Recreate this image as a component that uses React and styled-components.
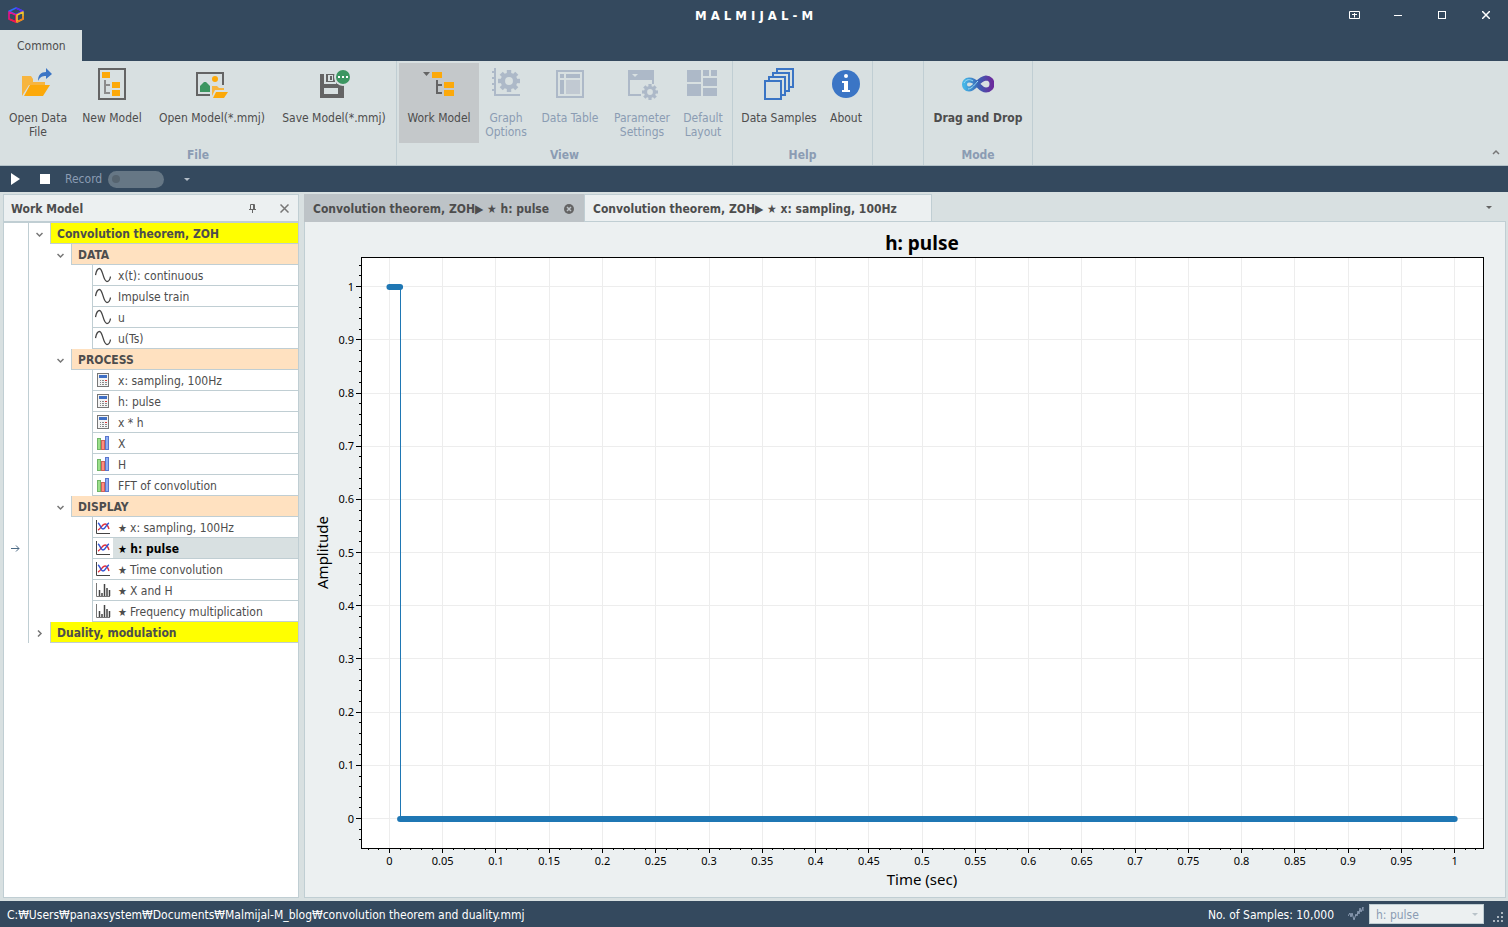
import { useLayoutEffect, useRef, useState } from "react";
import styled, { createGlobalStyle, css } from "styled-components";

const navy = "#34495e";
const face = "#d8e0e1";
const line = "#c0ced3";
const pane = "#ecf0f1";
const ink = "#4d4d4d";
const muted = "#8b9cb3";
const disabled = "#adb9c8";
const gold = "#fca90a";
const grey = "#646464";

const GlobalStyle = createGlobalStyle`
  * {
    box-sizing: border-box;
  }
  body {
    margin: 0;
    background: ${face};
  }
  body, button, select {
    font-family: "DejaVu Sans Condensed", "DejaVu Sans", sans-serif;
    font-size: 12px;
    line-height: 14px;
    color: ${ink};
  }
  button {
    border: 0;
    padding: 0;
    background: none;
  }
  svg {
    display: block;
    flex: none;
  }
`;

const Window = styled.div`
  display: flex;
  flex-direction: column;
  height: 100vh;
`;

/* ---------- title bar ---------- */

const TitleBar = styled.header`
  display: grid;
  grid-template-columns: 1fr auto 1fr;
  align-items: center;
  height: 30px;
  background: ${navy};
`;

const LogoBox = styled.div`
  padding-left: 8px;
`;

const Title = styled.h1`
  margin: 0;
  padding-top: 1px;
  font-size: 13px;
  font-weight: 700;
  color: #fff;
`;

const WindowButtons = styled.div`
  display: flex;
  justify-content: flex-end;
`;

const WindowButton = styled.button`
  display: flex;
  align-items: center;
  justify-content: center;
  width: 44px;
  height: 30px;
`;

/* ---------- ribbon ---------- */

const TabStrip = styled.nav`
  display: flex;
  height: 31px;
  background: ${navy};
`;

const RibbonTab = styled.button`
  padding: 0 16px 0 17px;
  background: ${face};
`;

const Ribbon = styled.section`
  display: flex;
  height: 105px;
  background: ${face};
  border-bottom: 1px solid #b3c1c8;
`;

const Group = styled.div`
  display: flex;
  flex-direction: column;
  flex: 0 0 ${(p) => p.$width}px;
  padding: 2px 2px 0;
  border-right: 1px solid ${line};
`;

const GroupButtons = styled.div`
  display: flex;
  height: 80px;
`;

const GroupTitle = styled.div`
  padding-top: 5px;
  text-align: center;
  font-weight: 700;
  color: ${muted};
`;

const BigButton = styled.button`
  display: flex;
  flex-direction: column;
  align-items: center;
  gap: 11px;
  width: ${(p) => p.$width}px;
  padding-top: 5px;
  white-space: pre;
  font-weight: ${(p) => (p.$bold ? 700 : 400)};
  background: ${(p) => (p.$active ? "#c4c8ca" : "none")};
  &:disabled {
    color: ${muted};
  }
`;

const Collapse = styled.button`
  align-self: flex-end;
  margin: 0 8px 10px auto;
`;

/* ---------- run bar ---------- */

const RunBar = styled.div`
  display: flex;
  align-items: center;
  height: 26px;
  padding-left: 11px;
  background: ${navy};
`;

const RunButton = styled.button`
  margin-right: ${(p) => p.$gap}px;
`;

const RecordLabel = styled.label`
  display: flex;
  align-items: center;
  gap: 6px;
  color: ${muted};
`;

const Switch = styled.input`
  appearance: none;
  display: flex;
  align-items: center;
  width: 56px;
  height: 17px;
  margin: 0 20px 0 0;
  padding-left: 4px;
  border-radius: 9px;
  background: #667785;
  &::before {
    content: "";
    width: 8px;
    height: 8px;
    border-radius: 50%;
    background: #56646f;
  }
`;

/* ---------- work area ---------- */

const Body = styled.main`
  display: flex;
  flex: 1;
  min-height: 0;
  gap: 5px;
  padding: 2px 2px 3px 3px;
  background: ${face};
`;

const SidePanel = styled.aside`
  flex: 0 0 296px;
  display: flex;
  flex-direction: column;
  border: 1px solid ${line};
  background: #fff;
`;

const PanelHeader = styled.div`
  display: flex;
  align-items: center;
  height: 28px;
  padding: 0 9px 0 7px;
  background: ${pane};
  border-bottom: 2px solid ${line};
`;

const PanelTitle = styled.h2`
  flex: 1;
  margin: 0;
  padding-top: 1px;
  font-size: 12px;
  font-weight: 700;
`;

const PanelButton = styled.button`
  margin-left: 24px;
`;

const Tree = styled.ul`
  margin: 0;
  padding: 0;
  list-style: none;
`;

const Row = styled.li`
  display: flex;
  height: 21px;
`;

const Marker = styled.div`
  display: flex;
  align-items: center;
  justify-content: center;
  flex: 0 0 25px;
  padding-right: 2px;
  border-right: 1px solid ${line};
`;

const Indent = styled.div`
  display: flex;
  align-items: center;
  justify-content: flex-end;
  flex: 0 0 ${(p) => p.$level * 21}px;
  padding: 2px 7px 0 0;
`;

const rowFill = { 1: "#ffff00", 2: "#ffe1c0", 3: "#fff" };

const Node = styled.button`
  display: flex;
  align-items: center;
  flex: 1;
  border-left: 1px solid ${line};
  border-bottom: 1px solid ${line};
  background: ${(p) => rowFill[p.$level]};
  font-weight: ${(p) => (p.$level < 3 ? 700 : 400)};
  padding-left: ${(p) => (p.$level < 3 ? 6 : 2)}px;
`;

const NodeText = styled.span`
  flex: 1;
  height: 20px;
  line-height: 22px;
  text-align: left;
  white-space: nowrap;
  ${(p) =>
    p.$leaf &&
    css`
      margin-left: 2px;
      padding-left: 5px;
    `}
  ${(p) =>
    p.$selected &&
    css`
      background: ${face};
      color: #000;
      font-weight: 700;
    `}
`;

const Star = styled.span`
  font-size: 11px;
`;

const Documents = styled.section`
  flex: 1;
  min-width: 0;
  display: flex;
  flex-direction: column;
`;

const DocTabs = styled.div`
  display: flex;
  flex: 0 0 28px;
`;

const DocTab = styled.button`
  display: flex;
  align-items: center;
  justify-content: space-between;
  width: ${(p) => p.$width}px;
  padding: 1px 9px 0 8px;
  white-space: nowrap;
  font-weight: 700;
  border: 1px solid ${(p) => (p.$active ? "#bdc3c7" : line)};
  background: ${(p) => (p.$active ? "#bdc3c7" : pane)};
`;

const TabFiller = styled.div`
  flex: 1;
  display: flex;
  align-items: center;
  justify-content: flex-end;
  padding-right: 14px;
  border-bottom: 1px solid ${line};
`;

const ChartPane = styled.div`
  flex: 1;
  min-height: 0;
  overflow: hidden;
  border: 1px solid ${line};
  border-top: 0;
  background: ${pane};
`;

const ChartSvg = styled.svg`
  width: 100%;
  height: 100%;
  font-family: "Noto Sans", "Open Sans", sans-serif;
  font-size: 11px;
  fill: #000;
`;

/* ---------- status bar ---------- */

const StatusBar = styled.footer`
  display: flex;
  align-items: center;
  height: 26px;
  padding: 0 4px 0 7px;
  background: ${navy};
  color: #fff;
`;

const FilePath = styled.span`
  flex: 1;
  padding-top: 1px;
`;

const SampleCount = styled.span`
  margin-right: 14px;
  padding-top: 1px;
`;

const PickerLabel = styled.label`
  display: grid;
  grid-template-columns: 21px 115px;
  align-items: center;
  margin-right: 8px;
`;

const Picker = styled.select`
  appearance: none;
  height: 20px;
  padding: 1px 6px 0;
  border: 1px solid ${line};
  border-radius: 0;
  background: ${pane};
  color: ${muted};
  opacity: 1;
  grid-area: 1 / 2;
`;

const PickerArrow = styled.span`
  grid-area: 1 / 2;
  justify-self: end;
  padding-right: 6px;
  pointer-events: none;
`;

const Grip = styled.div`
  padding-top: 6px;
`;

/* ---------- icons ---------- */

const Icon = ({ size = 32, children }) => (
  <svg width={size} height={size} viewBox={`0 0 ${size} ${size}`} aria-hidden="true">
    {children}
  </svg>
);

const Down = ({ color = grey, width = 6 }) => (
  <svg width={width} height={width / 2} viewBox="0 0 6 3" aria-hidden="true">
    <path d="M0 0h6L3 3z" fill={color} />
  </svg>
);

const Logo = () => (
  <Icon size={16}>
    <g fill="none" strokeWidth="1.6" strokeLinejoin="round">
      <path d="M1 4.2 8 1l7 3.2L8 7.6z" stroke="#2d6bff" />
      <path d="M8 1l7 3.2L8 7.6" stroke="#5a2bea" />
      <path d="M1 5v7l7 3V8z" stroke="#e8128b" />
      <path d="M1 12l7 3V8" stroke="#f0184a" />
      <path d="M15 5v7l-6 3V8z" stroke="#f3c32a" />
      <path d="M15 9v3l-6 3" stroke="#f0801e" />
    </g>
  </Icon>
);

const Gear = ({ cx, cy, r }) => (
  <g transform={`translate(${cx} ${cy})`} fill={disabled}>
    {[0, 45, 90, 135].map((a) => (
      <rect key={a} x={-r / 5} y={-r} width={(r * 2) / 5} height={r * 2} transform={`rotate(${a})`} />
    ))}
    <circle r={r * 0.76} />
    <circle r={r * 0.36} fill={face} />
  </g>
);

const OpenDataIcon = () => (
  <Icon>
    <path d="M0 8h9l2 3v3h12v3H7L0 28z" fill="#f7b53f" />
    <path d="M8 17h20l-7 11H2z" fill={gold} />
    <path d="M16 13C16 7 19 4 24 4V0l6 6-6 5V8c-4 0-6 1-8 5z" fill="#3b75c5" />
  </Icon>
);

const NewModelIcon = () => (
  <Icon>
    <rect x="3" y="1" width="26" height="30" fill="none" stroke={grey} strokeWidth="2" />
    <path d="M6 4h8v6H6zM16 14h8v6h-8zM16 22h8v6h-8z" fill={gold} />
    <path d="M9 12v13h5M9 17h5" fill="none" stroke="#8c8c8c" strokeWidth="2" />
  </Icon>
);

const OpenModelIcon = () => (
  <Icon>
    <path d="M27 17V5H1v22h13" fill="none" stroke={grey} strokeWidth="2" />
    <circle cx="19" cy="11" r="3" fill={gold} />
    <path d="M4 18l4-4h2l4 4v6H4z" fill="#3c9661" />
    <path d="M16 18h5l2 2h5v2H19l-3 6z" fill="#f7b53f" />
    <path d="M20 24h12l-4 6H17z" fill={gold} />
  </Icon>
);

const SaveModelIcon = () => (
  <Icon>
    <path d="M2 6h24v24H2z" fill={grey} />
    <path d="M6 6h12v10H6zM6 20h14v6H6z" fill={face} />
    <path d="M8 6h9v8H8z" fill={grey} />
    <path d="M10 7h5v6h-5z" fill={face} />
    <path d="M12 8h2v4h-2z" fill={grey} />
    <circle cx="25" cy="9" r="9" fill={face} />
    <circle cx="25" cy="9" r="7" fill="#3c9661" />
    <path d="M20 8h2v2h-2zM24 8h2v2h-2zM28 8h2v2h-2z" fill="#fff" />
  </Icon>
);

const WorkModelIcon = () => (
  <Icon>
    <path d="M0 4h7L3.500 8z" fill={grey} />
    <path d="M9 4h10v6H9zM21 14h10v6H21zM21 22h10v6H21z" fill={gold} />
    <path d="M14 12v13h5M14 17h5" fill="none" stroke={grey} strokeWidth="2" />
  </Icon>
);

const GraphIcon = () => (
  <Icon>
    <path d="M5 0v27h25M2 4h3M2 10h3M2 16h3M2 22h3" fill="none" stroke={disabled} strokeWidth="2" />
    <Gear cx={19} cy={13} r={11} />
  </Icon>
);

const TableIcon = () => (
  <Icon>
    <rect x="3" y="3" width="26" height="26" fill="none" stroke={disabled} strokeWidth="2" />
    <path d="M6 6h4v4H6zM12 6h14v4H12zM6 12h4v14H6z" fill={disabled} />
    <path d="M12 12h14v14H12z" fill="#c1c9d2" />
  </Icon>
);

const ParameterIcon = () => (
  <Icon>
    <path d="M2 2h26v10H2z" fill={disabled} />
    <path d="M3 12v15h12M27 12v4" fill="none" stroke={disabled} strokeWidth="2" />
    <path d="M6 6h6L9 9z" fill={face} />
    <Gear cx={24} cy={24} r={8} />
  </Icon>
);

const LayoutIcon = () => (
  <Icon>
    <path
      d="M0 2h14v12H0zM16 2h6v6h-6zM24 2h6v6h-6zM16 10h14v8H16zM0 16h14v12H0zM16 20h14v8H16z"
      fill={disabled}
    />
  </Icon>
);

const SamplesIcon = () => (
  <Icon>
    {[3, 2, 1, 0].map((i) => (
      <rect
        key={i}
        x={2 + 4 * i}
        y={13 - 4 * i}
        width="16"
        height="18"
        fill={face}
        stroke="#3b75c5"
        strokeWidth="2"
      />
    ))}
  </Icon>
);

const AboutIcon = () => (
  <Icon>
    <circle cx="16" cy="16" r="14" fill="#3b75c5" />
    <circle cx="16" cy="8" r="2" fill="#fff" />
    <path d="M12 13h6v9h2v2h-8v-2h2v-7h-2z" fill="#fff" />
  </Icon>
);

const DragIcon = () => (
  <Icon>
    <defs>
      <linearGradient id="loop" x1="0" x2="1" y1="0" y2="0">
        <stop offset="0" stopColor="#45b5e6" />
        <stop offset="0.5" stopColor="#3a62b4" />
        <stop offset="1" stopColor="#6a2c9c" />
      </linearGradient>
    </defs>
    <path
      d="M16 17C12 12 9 12 7 12c-6 0-6 9 0 9 6 0 9-10 17-11 8 0 8 12 0 12-4 0-6-3-8-5z"
      fill="none"
      stroke="url(#loop)"
      strokeWidth="5"
    />
    <path d="M2 15c2-4 6-4 9-2M6 21c4 0 7-5 10-8" fill="none" stroke="#9adcf5" />
  </Icon>
);

const SineIcon = () => (
  <Icon size={16}>
    <path
      d="M.5 8C1.500 3 3 1.500 4.500 1.500 8 1.500 8 14.500 12 14.500c1.500 0 3-2 3.500-5"
      fill="none"
      stroke="#444"
      strokeWidth="1.300"
    />
  </Icon>
);

const CalcIcon = () => (
  <Icon size={16}>
    <rect x="2.500" y="1.500" width="11" height="13" fill="#f4f4f4" stroke="#777" />
    <path d="M4 3h8v3H4z" fill="#3f6fc4" />
    <path d="M5 8h1v1H5zM7 8h2v1H7zM5 10h1v1H5zM7 10h2v1H7zM5 12h1v1H5zM7 12h2v1H7zM10 10h2v1h-2zM10 12h2v1h-2z" fill="#888" />
    <path d="M10 8h2v1h-2z" fill="#d33" />
  </Icon>
);

const SpectrumIcon = () => (
  <Icon size={16}>
    <rect x="2.500" y="3.500" width="3" height="11" fill="#9be08a" stroke="#6fb468" />
    <rect x="6.500" y="5.500" width="3" height="9" fill="#ff8d80" stroke="#cf625a" />
    <rect x="10.500" y="1.500" width="3" height="13" fill="#8fb0f5" stroke="#5a76cc" />
  </Icon>
);

const PlotIcon = () => (
  <Icon size={16}>
    <path d="M1.500 1v13.500H15" fill="none" stroke="#444" />
    <path d="M3 11c3-1 4-6 7-6 2 0 3 2 4 5" fill="none" stroke="#e0303c" strokeWidth="1.400" />
    <path d="M3 4c2 1 3 6 5 6 3 0 3-5 6-6" fill="none" stroke="#3557d6" strokeWidth="1.400" />
  </Icon>
);

const BarsIcon = () => (
  <Icon size={16}>
    <path d="M1.500 1v13.500H15" fill="none" stroke="#777" />
    <path d="M4.500 8v6M7 11v3M9.500 2v12M12 6v8M14.500 8v6" fill="none" stroke="#444" strokeWidth="1.500" />
  </Icon>
);

const Chevron = ({ open }) => (
  <svg width="7" height="7" viewBox="0 0 7 7" aria-hidden="true">
    <path d={open ? "M.5 2l3 3 3-3" : "M2 .5l3 3-3 3"} fill="none" stroke="#777" strokeWidth="1.500" />
  </svg>
);

/* ---------- data ---------- */

const groups = [
  {
    title: "File",
    width: 397,
    items: [
      { label: "Open Data\nFile", width: 72, icon: <OpenDataIcon /> },
      { label: "New Model", width: 76, icon: <NewModelIcon /> },
      { label: "Open Model(*.mmj)", width: 124, icon: <OpenModelIcon /> },
      { label: "Save Model(*.mmj)", width: 120, icon: <SaveModelIcon /> },
    ],
  },
  {
    title: "View",
    width: 336,
    items: [
      { label: "Work Model", width: 80, icon: <WorkModelIcon />, active: true },
      { label: "Graph\nOptions", width: 54, icon: <GraphIcon />, off: true },
      { label: "Data Table", width: 74, icon: <TableIcon />, off: true },
      { label: "Parameter\nSettings", width: 70, icon: <ParameterIcon />, off: true },
      { label: "Default\nLayout", width: 52, icon: <LayoutIcon />, off: true },
    ],
  },
  {
    title: "Help",
    width: 140,
    items: [
      { label: "Data Samples", width: 88, icon: <SamplesIcon /> },
      { label: "About", width: 46, icon: <AboutIcon /> },
    ],
  },
  { title: "", width: 51, items: [] },
  {
    title: "Mode",
    width: 109,
    items: [{ label: "Drag and Drop", width: 104, icon: <DragIcon />, bold: true }],
  },
];

const tree = [
  { level: 1, text: "Convolution theorem, ZOH", open: true },
  { level: 2, text: "DATA", open: true },
  { level: 3, text: "x(t): continuous", icon: <SineIcon /> },
  { level: 3, text: "Impulse train", icon: <SineIcon /> },
  { level: 3, text: "u", icon: <SineIcon /> },
  { level: 3, text: "u(Ts)", icon: <SineIcon /> },
  { level: 2, text: "PROCESS", open: true },
  { level: 3, text: "x: sampling, 100Hz", icon: <CalcIcon /> },
  { level: 3, text: "h: pulse", icon: <CalcIcon /> },
  { level: 3, text: "x * h", icon: <CalcIcon /> },
  { level: 3, text: "X", icon: <SpectrumIcon /> },
  { level: 3, text: "H", icon: <SpectrumIcon /> },
  { level: 3, text: "FFT of convolution", icon: <SpectrumIcon /> },
  { level: 2, text: "DISPLAY", open: true },
  { level: 3, star: true, text: "x: sampling, 100Hz", icon: <PlotIcon /> },
  { level: 3, star: true, text: "h: pulse", icon: <PlotIcon />, selected: true },
  { level: 3, star: true, text: "Time convolution", icon: <PlotIcon /> },
  { level: 3, star: true, text: "X and H", icon: <BarsIcon /> },
  { level: 3, star: true, text: "Frequency multiplication", icon: <BarsIcon /> },
  { level: 1, text: "Duality, modulation", open: false },
];

/* ---------- chart ---------- */

const range = (from, to) => Array.from({ length: to - from + 1 }, (_, i) => from + i);
const snap = (v) => Math.floor(v) + 0.5;

function Chart() {
  const ref = useRef(null);
  const [size, setSize] = useState({ w: 1200, h: 676 });

  useLayoutEffect(() => {
    const measure = () => {
      const box = ref.current.getBoundingClientRect();
      setSize({ w: box.width, h: box.height });
    };
    measure();
    window.addEventListener("resize", measure);
    return () => window.removeEventListener("resize", measure);
  }, []);

  const left = 56;
  const top = 35;
  const right = size.w - 22;
  const bottom = size.h - 49;
  const x = (v) => left + ((v + 0.0267) / 1.0533) * (right - left);
  const y = (v) => bottom - ((v + 0.0553) / 1.111) * (bottom - top);
  const mid = (left + right) / 2;
  const xMajor = range(0, 20).map((i) => i / 20);
  const yMajor = range(0, 10).map((i) => i / 10);

  return (
    <ChartSvg ref={ref} role="img" aria-label="h: pulse">
      <rect x={left} y={top} width={right - left} height={bottom - top} fill="#fff" />
      <g stroke="#ededed">
        {xMajor.map((v) => (
          <line key={v} x1={snap(x(v))} x2={snap(x(v))} y1={top} y2={bottom} />
        ))}
        {yMajor.map((v) => (
          <line key={v} x1={left} x2={right} y1={snap(y(v))} y2={snap(y(v))} />
        ))}
      </g>
      <g stroke="#000">
        {range(-2, 102).map((i) => (
          <line key={i} x1={snap(x(i / 100))} x2={snap(x(i / 100))} y1={bottom} y2={bottom + (i % 5 ? 2 : 5)} />
        ))}
        {range(-2, 52).map((i) => (
          <line key={i} x1={left - (i % 5 ? 2 : 5)} x2={left} y1={snap(y(i / 50))} y2={snap(y(i / 50))} />
        ))}
      </g>
      <rect x={snap(left)} y={snap(top)} width={right - left} height={bottom - top} fill="none" stroke="#000" />
      <g fill="none" stroke="#1f77b4">
        <line x1={snap(x(0.01))} x2={snap(x(0.01))} y1={y(1)} y2={y(0)} />
        <path
          d={`M${x(0)} ${Math.ceil(y(1))}H${x(0.01)}M${x(0.01)} ${Math.ceil(y(0))}H${x(1)}`}
          strokeWidth="6"
          strokeLinecap="round"
        />
      </g>
      <g textAnchor="middle">
        {xMajor.map((v) => (
          <text key={v} x={x(v)} y={bottom + 17}>
            {v}
          </text>
        ))}
        <text x={mid} y={top - 7} fontSize="19" fontWeight="700">
          h: pulse
        </text>
        <text x={mid} y={bottom + 37} fontSize="15">
          Time (sec)
        </text>
        <text transform={`translate(23 ${(top + bottom) / 2}) rotate(-90)`} fontSize="15">
          Amplitude
        </text>
      </g>
      <g textAnchor="end">
        {yMajor.map((v) => (
          <text key={v} x={left - 7} y={y(v) + 4}>
            {v}
          </text>
        ))}
      </g>
    </ChartSvg>
  );
}

export default function App() {
  return (
    <Window>
      <GlobalStyle />
      <TitleBar>
        <LogoBox>
          <Logo />
        </LogoBox>
        <Title>M A L M I J A L - M</Title>
        <WindowButtons>
          <WindowButton aria-label="Ribbon display options">
            <svg width="11" height="8" viewBox="0 0 11 8" fill="none" stroke="#fff">
              <path d="M.5.500h10v7H.5zM5.500 6.500V2M3 3.500h5" />
            </svg>
          </WindowButton>
          <WindowButton aria-label="Minimize">
            <svg width="8" height="8" viewBox="0 0 8 8">
              <path d="M0 4.500h8" stroke="#fff" />
            </svg>
          </WindowButton>
          <WindowButton aria-label="Maximize">
            <svg width="8" height="8" viewBox="0 0 8 8">
              <rect x=".5" y=".5" width="7" height="7" fill="none" stroke="#fff" />
            </svg>
          </WindowButton>
          <WindowButton aria-label="Close">
            <svg width="8" height="8" viewBox="0 0 8 8">
              <path d="M0 0l8 8M8 0L0 8" stroke="#fff" strokeWidth="1.500" />
            </svg>
          </WindowButton>
        </WindowButtons>
      </TitleBar>

      <TabStrip>
        <RibbonTab>Common</RibbonTab>
      </TabStrip>

      <Ribbon>
        {groups.map((g, i) => (
          <Group key={i} $width={g.width}>
            <GroupButtons>
              {g.items.map((b) => (
                <BigButton key={b.label} $width={b.width} $active={b.active} $bold={b.bold} disabled={b.off}>
                  {b.icon}
                  {b.label}
                </BigButton>
              ))}
            </GroupButtons>
            <GroupTitle>{g.title}</GroupTitle>
          </Group>
        ))}
        <Collapse aria-label="Collapse ribbon">
          <svg width="8" height="6" viewBox="0 0 8 6">
            <path d="M1 5l3-3 3 3" fill="none" stroke="#777" strokeWidth="1.500" />
          </svg>
        </Collapse>
      </Ribbon>

      <RunBar>
        <RunButton $gap={20} aria-label="Run">
          <svg width="9" height="12" viewBox="0 0 9 12">
            <path d="M0 0l9 6-9 6z" fill="#fff" />
          </svg>
        </RunButton>
        <RunButton $gap={15} aria-label="Stop">
          <svg width="10" height="10" viewBox="0 0 10 10">
            <path d="M0 0h10v10H0z" fill="#fff" />
          </svg>
        </RunButton>
        <RecordLabel>
          Record
          <Switch type="checkbox" role="switch" disabled />
        </RecordLabel>
        <button aria-label="More">
          <Down color="#b4bec8" />
        </button>
      </RunBar>

      <Body>
        <SidePanel>
          <PanelHeader>
            <PanelTitle>Work Model</PanelTitle>
            <PanelButton aria-label="Pin">
              <svg width="7" height="9" viewBox="0 0 7 9">
                <path d="M1.500 5V.5h4V5M4.500 0v5M0 5.500h7M3.500 6v3" fill="none" stroke="#666" />
              </svg>
            </PanelButton>
            <PanelButton aria-label="Close panel">
              <svg width="9" height="9" viewBox="0 0 9 9">
                <path d="M.5.5l8 8M8.500.5l-8 8" stroke="#777" strokeWidth="1.500" />
              </svg>
            </PanelButton>
          </PanelHeader>
          <Tree>
            {tree.map((n, i) => (
              <Row key={i}>
                <Marker>
                  {n.selected && (
                    <svg width="9" height="7" viewBox="0 0 9 7">
                      <path d="M0 3.500h8M5 .5l3 3-3 3" fill="none" stroke="#4c6a85" />
                    </svg>
                  )}
                </Marker>
                <Indent $level={n.level}>{n.level < 3 && <Chevron open={n.open} />}</Indent>
                <Node $level={n.level}>
                  {n.icon}
                  <NodeText $leaf={n.level === 3} $selected={n.selected}>
                    {n.star && <Star>★ </Star>}
                    {n.text}
                  </NodeText>
                </Node>
              </Row>
            ))}
          </Tree>
        </SidePanel>

        <Documents>
          <DocTabs>
            <DocTab $width={280} $active>
              Convolution theorem, ZOH▶ ★ h: pulse
              <svg width="10" height="10" viewBox="0 0 10 10">
                <circle cx="5" cy="5" r="5" fill={grey} />
                <path d="M3 3l4 4M7 3L3 7" stroke="#bdc3c7" strokeWidth="1.500" />
              </svg>
            </DocTab>
            <DocTab $width={348}>Convolution theorem, ZOH▶ ★ x: sampling, 100Hz</DocTab>
            <TabFiller>
              <button aria-label="Open documents">
                <Down />
              </button>
            </TabFiller>
          </DocTabs>
          <ChartPane>
            <Chart />
          </ChartPane>
        </Documents>
      </Body>

      <StatusBar>
        <FilePath>C:₩Users₩panaxsystem₩Documents₩Malmijal-M_blog₩convolution theorem and duality.mmj</FilePath>
        <SampleCount>No. of Samples: 10,000</SampleCount>
        <PickerLabel>
          <svg width="16" height="14" viewBox="0 0 16 14" role="img" aria-label="Signal">
            <path d="M0 9l2-3 1 4 1-4 2 7 2-6 1 2 1-5 1 3 1-6 1 4 2-5v4" fill="none" stroke="#8b9cb3" />
          </svg>
          <Picker disabled defaultValue="h: pulse">
            <option>h: pulse</option>
          </Picker>
          <PickerArrow>
            <Down color="#b9c3ca" />
          </PickerArrow>
        </PickerLabel>
        <Grip>
          <svg width="12" height="10" viewBox="0 0 12 10" aria-hidden="true">
            <path d="M9 0h2v2H9zM5 4h2v2H5zM9 4h2v2H9zM1 8h2v2H1zM5 8h2v2H5zM9 8h2v2H9z" fill="#aab4be" />
          </svg>
        </Grip>
      </StatusBar>
    </Window>
  );
}
